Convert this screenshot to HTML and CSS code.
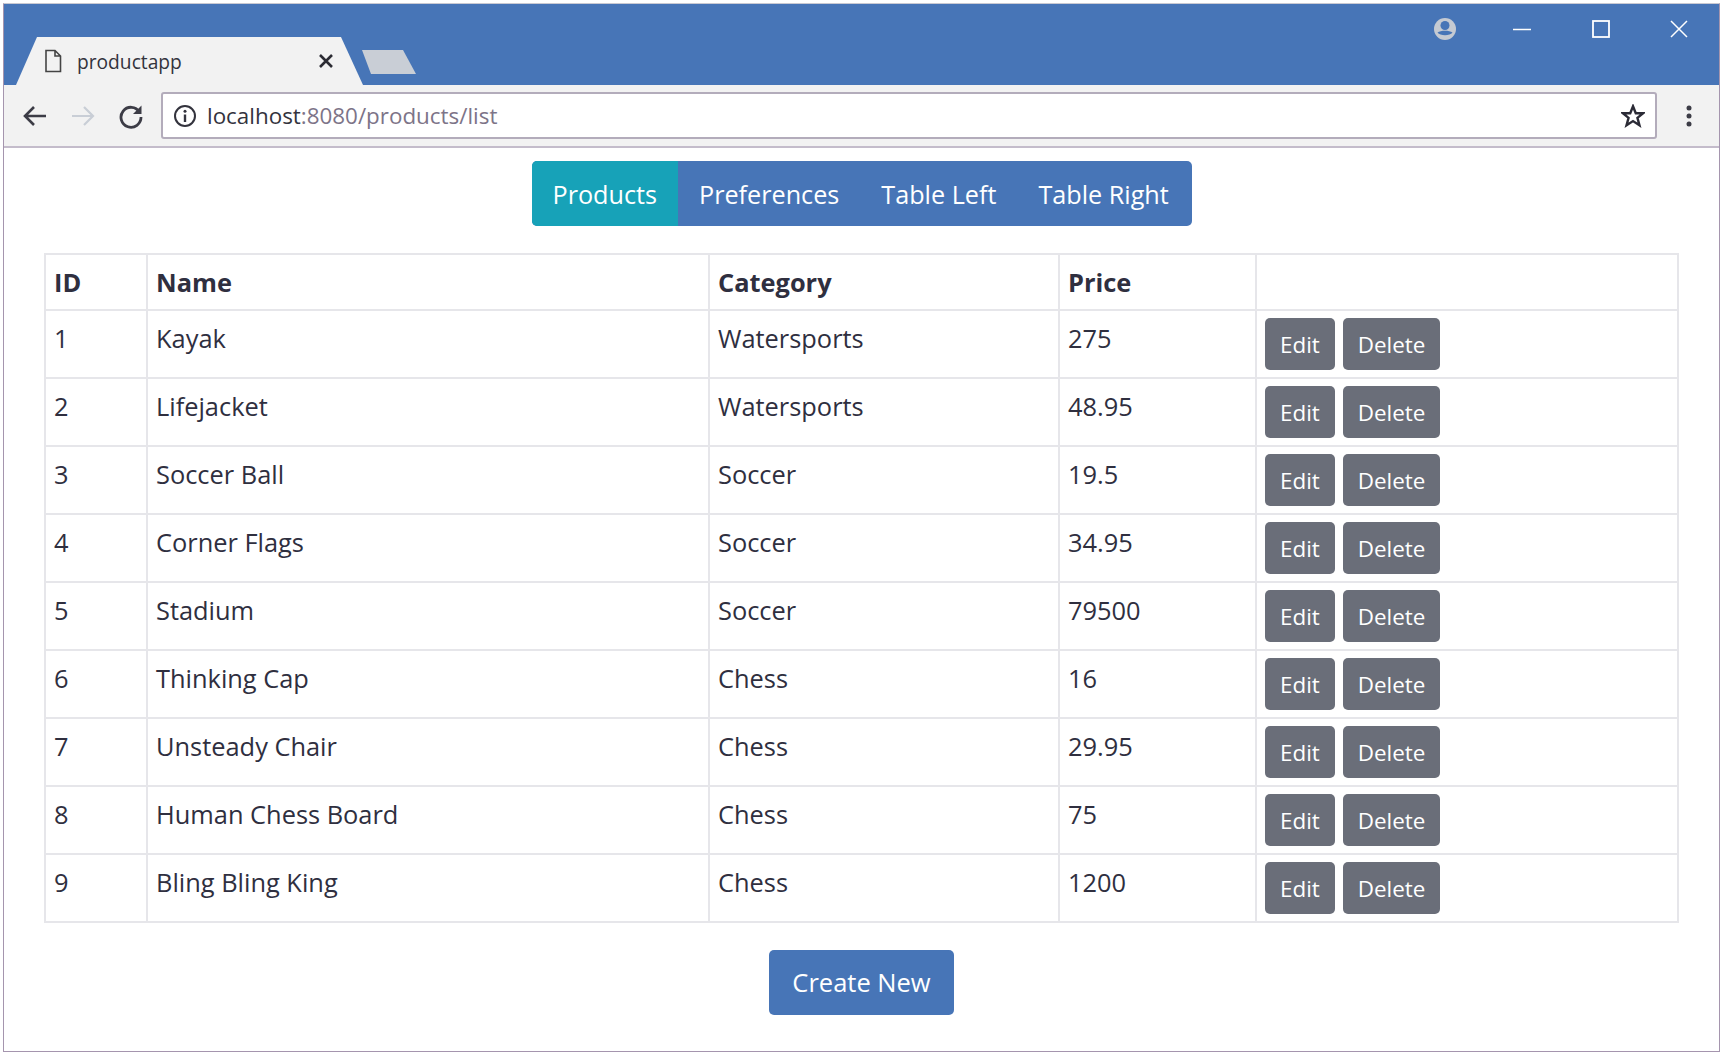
FILE: index.html
```html
<!DOCTYPE html>
<html lang="en">
<head>
    <meta charset="UTF-8">
    <title>productapp</title>
    <link rel="stylesheet" href="styles.css">
</head>
<body>
    <div class="window">
        <div class="titlebar">
            <div class="tab">
                <svg class="tab-icon" width="18" height="24" viewBox="0 0 18 24"><path d="M2 1.500H11L16.500 7V22.500H2Z M11 1.500V7H16.500" fill="none" stroke="#444" stroke-width="1.600"/></svg>
                <span class="tab-title">productapp</span>
                <svg class="tab-close" width="16" height="16" viewBox="0 0 16 16"><path d="M2 2L14 14M14 2L2 14" stroke="#2b2b33" stroke-width="2.600"/></svg>
            </div>
            <div class="new-tab"></div>
            <div class="win-controls">
                <svg class="win-user" width="24" height="24" viewBox="0 0 24 24"><circle cx="12" cy="12" r="11" fill="#c5cad2"/><circle cx="12" cy="8.500" r="4.500" fill="#4775b7"/><path d="M4.500 15.500C8 13 16 13 19.500 15.500C17 19 7 19 4.500 15.500Z" fill="#4775b7"/></svg>
                <svg class="win-min" width="18" height="18" viewBox="0 0 18 18"><path d="M0 9.500H18" stroke="#fff" stroke-width="1.500"/></svg>
                <svg class="win-max" width="18" height="18" viewBox="0 0 18 18"><rect x="1" y="1" width="16" height="16" fill="none" stroke="#fff" stroke-width="1.800"/></svg>
                <svg class="win-close" width="18" height="18" viewBox="0 0 18 18"><path d="M1 1L17 17M17 1L1 17" stroke="#fff" stroke-width="1.500"/></svg>
            </div>
        </div>
        <div class="toolbar">
            <svg class="nav-icon" width="26" height="24" viewBox="0 0 26 24"><path d="M24 12H3M12 3L3 12L12 21" fill="none" stroke="#3c3c46" stroke-width="2.600"/></svg>
            <svg class="nav-icon" width="26" height="24" viewBox="0 0 26 24"><path d="M2 12H23M14 3L23 12L14 21" fill="none" stroke="#c9ced6" stroke-width="2.200"/></svg>
            <svg class="nav-icon" width="26" height="26" viewBox="0 0 26 26"><path d="M21.500 9A10 10 0 1 0 23 14" fill="none" stroke="#3c3c46" stroke-width="2.800"/><path d="M23.500 2.500V11H15Z" fill="#3c3c46"/></svg>
            <div class="address">
                <svg class="info-icon" width="24" height="24" viewBox="0 0 24 24"><circle cx="12" cy="12" r="10" fill="none" stroke="#33333d" stroke-width="2"/><path d="M12 10.500V18" stroke="#33333d" stroke-width="2.400"/><circle cx="12" cy="7.300" r="1.500" fill="#33333d"/></svg>
                <span class="url"><span class="url-host">localhost</span>:8080/products/list</span>
                <svg class="star-icon" width="24" height="24" viewBox="0 0 26 26"><path d="M13 2.500L16 10H24L17.800 15L20 23L13 18.500L6 23L8.200 15L2 10H10Z" fill="none" stroke="#2b2b36" stroke-width="2.600"/></svg>
            </div>
            <svg class="menu-icon" width="6" height="22" viewBox="0 0 6 22"><circle cx="3" cy="3" r="2.500" fill="#3c3c46"/><circle cx="3" cy="11" r="2.500" fill="#3c3c46"/><circle cx="3" cy="19" r="2.500" fill="#3c3c46"/></svg>
        </div>
        <div class="page">
            <div class="nav-group">
                <a class="nav-item active">Products</a>
                <a class="nav-item">Preferences</a>
                <a class="nav-item">Table Left</a>
                <a class="nav-item">Table Right</a>
            </div>
            <table class="products">
                <colgroup>
                    <col class="col-id">
                    <col class="col-name">
                    <col class="col-category">
                    <col class="col-price">
                    <col>
                </colgroup>
                <thead>
                    <tr><th>ID</th><th>Name</th><th>Category</th><th>Price</th><th></th></tr>
                </thead>
                <tbody>
                    <tr><td>1</td><td>Kayak</td><td>Watersports</td><td>275</td><td class="cell-btns"><button class="btn">Edit</button><button class="btn">Delete</button></td></tr>
                    <tr><td>2</td><td>Lifejacket</td><td>Watersports</td><td>48.95</td><td class="cell-btns"><button class="btn">Edit</button><button class="btn">Delete</button></td></tr>
                    <tr><td>3</td><td>Soccer Ball</td><td>Soccer</td><td>19.5</td><td class="cell-btns"><button class="btn">Edit</button><button class="btn">Delete</button></td></tr>
                    <tr><td>4</td><td>Corner Flags</td><td>Soccer</td><td>34.95</td><td class="cell-btns"><button class="btn">Edit</button><button class="btn">Delete</button></td></tr>
                    <tr><td>5</td><td>Stadium</td><td>Soccer</td><td>79500</td><td class="cell-btns"><button class="btn">Edit</button><button class="btn">Delete</button></td></tr>
                    <tr><td>6</td><td>Thinking Cap</td><td>Chess</td><td>16</td><td class="cell-btns"><button class="btn">Edit</button><button class="btn">Delete</button></td></tr>
                    <tr><td>7</td><td>Unsteady Chair</td><td>Chess</td><td>29.95</td><td class="cell-btns"><button class="btn">Edit</button><button class="btn">Delete</button></td></tr>
                    <tr><td>8</td><td>Human Chess Board</td><td>Chess</td><td>75</td><td class="cell-btns"><button class="btn">Edit</button><button class="btn">Delete</button></td></tr>
                    <tr><td>9</td><td>Bling Bling King</td><td>Chess</td><td>1200</td><td class="cell-btns"><button class="btn">Edit</button><button class="btn">Delete</button></td></tr>
                </tbody>
            </table>
            <div class="actions">
                <button class="btn-create">Create New</button>
            </div>
        </div>
    </div>
</body>
</html>
```

FILE: styles.css
```css
*{
    box-sizing: border-box;
    padding: 0;
    margin: 0;
}
body{
    background: #fff;
    font-family: "Open Sans", "Noto Sans", sans-serif;
    color: #2f2f3f;
}
.window{
    width: 1717px;
    height: 1049px;
    margin: 3px 0 0 3px;
    border: 1px solid #a595ae;
    border-top-color: #c9c9d2;
    display: flex;
    flex-direction: column;
}
.titlebar{
    height: 81px;
    background: #4775b7;
    display: flex;
    align-items: flex-end;
    padding-left: 12px;
}
.tab{
    width: 347px;
    height: 48px;
    background: #f2f2f2;
    clip-path: polygon(0 100%, 21px 0, 325px 0, 100% 100%);
    display: flex;
    align-items: center;
    padding-left: 28px;
}
.tab-title{
    font-size: 19.200px;
    margin-left: 15px;
    color: #33333d;
}
.tab-close{
    margin-left: 136px;
}
.new-tab{
    width: 54px;
    height: 24px;
    margin: 0 0 11px -1px;
    background: #c9ced6;
    clip-path: polygon(0 0, 41px 0, 100% 100%, 9px 100%);
}
.win-controls{
    margin-left: auto;
    align-self: flex-start;
    display: flex;
    align-items: center;
    height: 50px;
    padding-right: 31px;
}
.win-min{
    margin-left: 56px;
}
.win-max{
    margin-left: 61px;
}
.win-close{
    margin-left: 60px;
}
.toolbar{
    height: 63px;
    background: #f2f2f2;
    border-bottom: 2px solid #c4bccb;
    display: flex;
    align-items: center;
    padding: 0 0 0 18px;
}
.nav-icon{
    margin-right: 22px;
}
.address{
    width: 1496px;
    height: 47px;
    margin-left: -5px;
    background: #fff;
    border: 2px solid #b3acbb;
    border-radius: 3px;
    display: flex;
    align-items: center;
    padding: 0 10px;
}
.url{
    font-size: 22.400px;
    margin-left: 10px;
    color: #7d7488;
}
.url-host{
    color: #33333d;
}
.star-icon{
    margin-left: auto;
}
.menu-icon{
    margin-left: 29px;
}
.page{
    flex: 1;
    padding: 13px 40px 0;
}
.nav-group{
    width: 660px;
    height: 65px;
    margin: 0 auto 27px;
    background: #4775b7;
    border-radius: 5px;
    overflow: hidden;
    display: flex;
    white-space: nowrap;
}
.nav-item{
    color: #fff;
    font-size: 25.200px;
    line-height: 67px;
    padding: 0 21px;
}
.nav-item.active{
    background: #17a2b8;
}
.products{
    width: 1635px;
    border-collapse: collapse;
    table-layout: fixed;
    font-size: 25.400px;
    border: 2px solid #e6e6ea;
}
.col-id{
    width: 102px;
}
.col-name{
    width: 562px;
}
.col-category{
    width: 350px;
}
.col-price{
    width: 197px;
}
.products th,.products td{
    border: 2px solid #e6e6ea;
    padding: 10px 8px 0;
    text-align: left;
    vertical-align: top;
}
.products th{
    height: 56px;
    font-weight: 700;
}
.products td{
    height: 68px;
    font-weight: 400;
}
.products .cell-btns{
    padding-top: 7px;
    padding-bottom: 7px;
}
.btn{
    display: inline-block;
    height: 52px;
    background: #6a6e79;
    color: #fff;
    border: 0;
    border-radius: 5px;
    font-family: inherit;
    font-size: 22.400px;
    padding: 0 15px;
    margin-right: 8px;
    vertical-align: top;
}
.actions{
    text-align: center;
    margin-top: 27px;
}
.btn-create{
    width: 185px;
    height: 65px;
    padding-bottom: 2px;
    background: #4775b7;
    color: #fff;
    border: 0;
    border-radius: 5px;
    font-family: inherit;
    font-size: 25.500px;
}
```
